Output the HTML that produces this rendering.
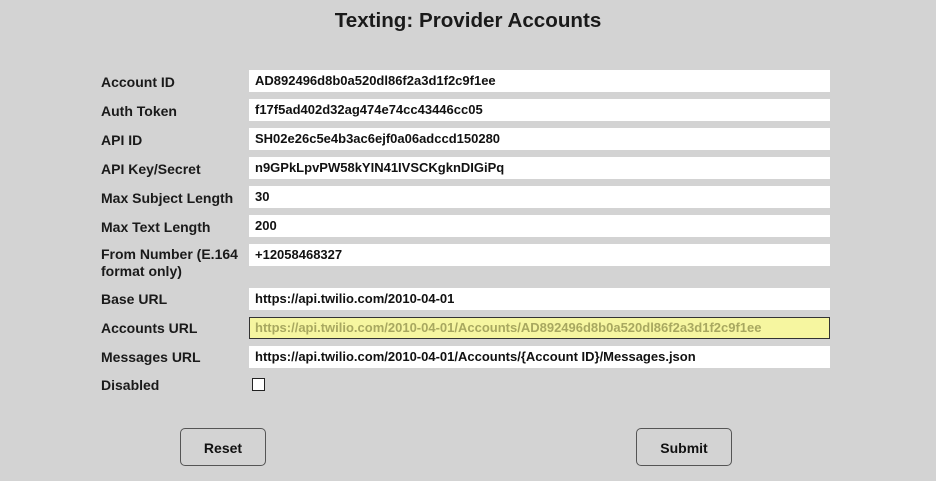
<!DOCTYPE html>
<html><head><style>
body{margin:0;width:936px;height:481px;background:#d3d3d3;font-family:"Liberation Sans",sans-serif;position:relative;overflow:hidden;color:#111}
h1{position:absolute;top:9px;left:0;width:936px;text-align:center;margin:0;font-size:20.6px;font-weight:bold;color:#1a1a1a}
.l{position:absolute;left:101px;font-size:14px;font-weight:bold;color:#1a1a1a;line-height:17px}
.i{position:absolute;left:249px;width:581px;height:22px;background:#fff;font-size:13px;font-weight:bold;line-height:22px;padding-left:6px;box-sizing:border-box;color:#111}
.y{background:#f6f6a0;color:#a8a860;border:1px solid #333;line-height:20px;padding-left:5px}
.b{position:absolute;top:428px;height:38px;border:1px solid #555;border-radius:5px;background:#d3d3d3;font-size:14px;font-weight:bold;text-align:center;line-height:38px;box-sizing:border-box}
.c{position:absolute;left:252px;top:378px;width:13px;height:13px;background:#fff;border:1px solid #222;box-sizing:border-box}
</style></head><body>
<h1>Texting: Provider Accounts</h1>
<div class="l" style="top:74px">Account ID</div><div class="i" style="top:70px">AD892496d8b0a520dl86f2a3d1f2c9f1ee</div>
<div class="l" style="top:103px">Auth Token</div><div class="i" style="top:99px">f17f5ad402d32ag474e74cc43446cc05</div>
<div class="l" style="top:132px">API ID</div><div class="i" style="top:128px">SH02e26c5e4b3ac6ejf0a06adccd150280</div>
<div class="l" style="top:161px">API Key/Secret</div><div class="i" style="top:157px">n9GPkLpvPW58kYIN41IVSCKgknDIGiPq</div>
<div class="l" style="top:190px">Max Subject Length</div><div class="i" style="top:186px">30</div>
<div class="l" style="top:219px">Max Text Length</div><div class="i" style="top:215px">200</div>
<div class="l" style="top:246px">From Number (E.164<br>format only)</div><div class="i" style="top:244px">+12058468327</div>
<div class="l" style="top:291px">Base URL</div><div class="i" style="top:288px">https://api.twilio.com/2010-04-01</div>
<div class="l" style="top:320px">Accounts URL</div><div class="i y" style="top:317px">https://api.twilio.com/2010-04-01/Accounts/AD892496d8b0a520dl86f2a3d1f2c9f1ee</div>
<div class="l" style="top:349px">Messages URL</div><div class="i" style="top:346px">https://api.twilio.com/2010-04-01/Accounts/{Account ID}/Messages.json</div>
<div class="l" style="top:377px">Disabled</div><div class="c"></div>
<div class="b" style="left:180px;width:86px">Reset</div>
<div class="b" style="left:636px;width:96px">Submit</div>
</body></html>
